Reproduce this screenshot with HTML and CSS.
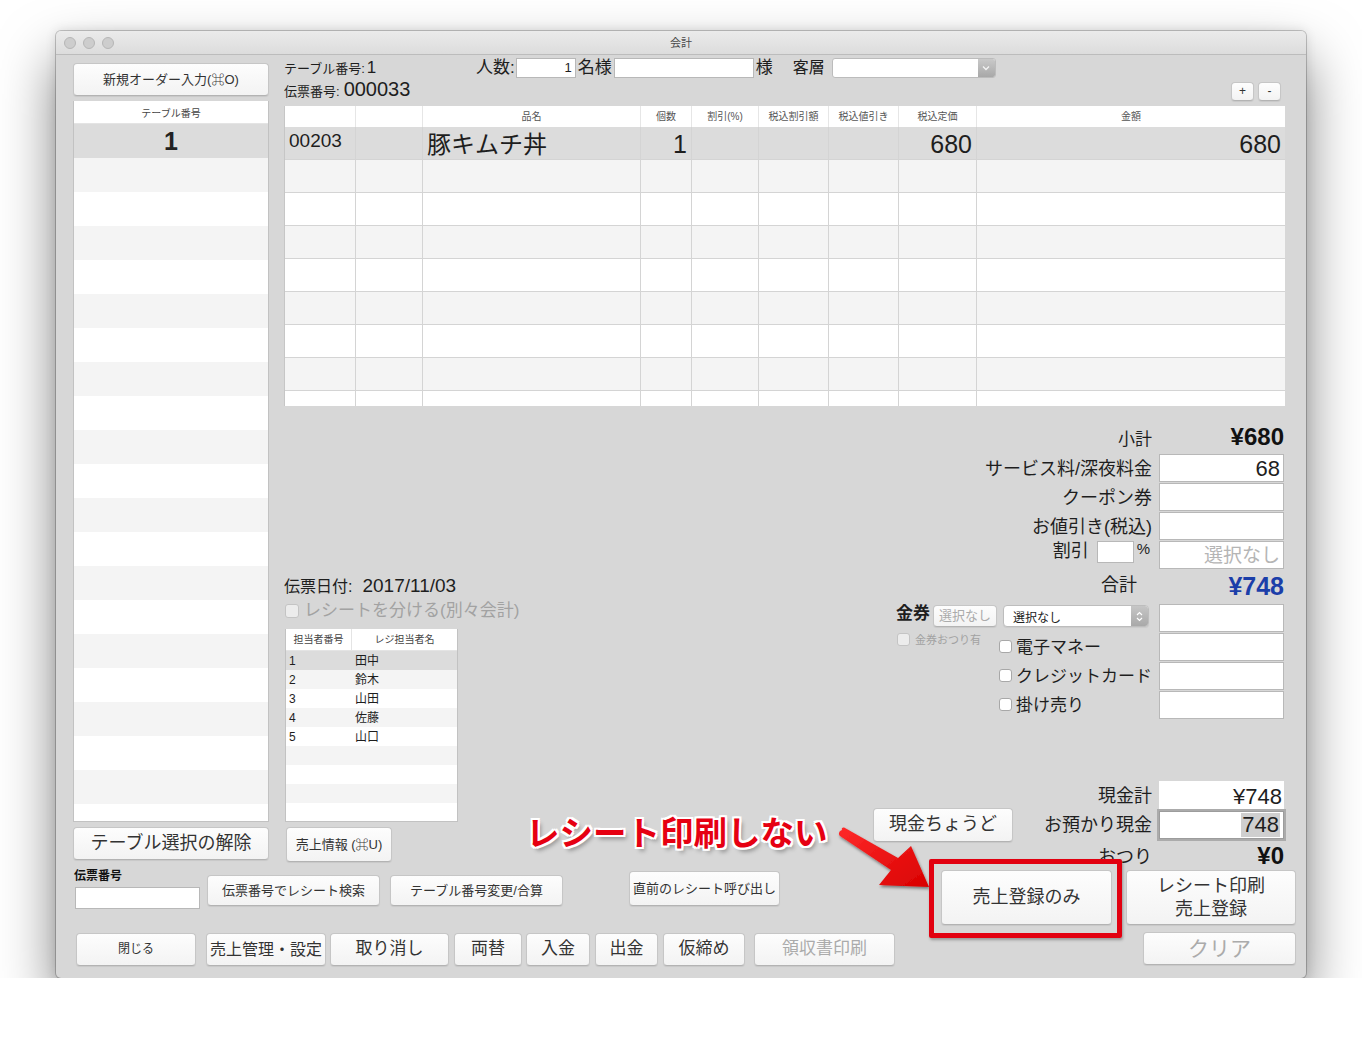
FILE: index.html
```html
<!DOCTYPE html>
<html lang="ja">
<head>
<meta charset="utf-8">
<title>会計</title>
<link rel="stylesheet" href="styles.css">
</head>
<body>
<div class="window">
  <div class="titlebar">
    <div class="lights"><span class="light"></span><span class="light"></span><span class="light"></span></div>
    <div class="title">会計</div>
    <div></div>
  </div>
  <div class="content">
    <div class="upper">
      <div class="leftcol">
        <div class="btn btn-new">新規オーダー入力(⌘O)</div>
        <div class="tlist">
          <div class="tlist-head">テーブル番号</div>
          <div class="tlist-row sel">1</div>
          <div class="tlist-row odd"></div><div class="tlist-row"></div>
          <div class="tlist-row odd"></div><div class="tlist-row"></div>
          <div class="tlist-row odd"></div><div class="tlist-row"></div>
          <div class="tlist-row odd"></div><div class="tlist-row"></div>
          <div class="tlist-row odd"></div><div class="tlist-row"></div>
          <div class="tlist-row odd"></div><div class="tlist-row"></div>
          <div class="tlist-row odd"></div><div class="tlist-row"></div>
          <div class="tlist-row odd"></div><div class="tlist-row"></div>
          <div class="tlist-row odd"></div><div class="tlist-row"></div>
          <div class="tlist-row odd"></div><div class="tlist-row"></div>
        </div>
        <div class="btn btn-clearsel">テーブル選択の解除</div>
      </div>

      <div class="main">
        <div class="header">
          <div class="info">
            <div class="info-line1"><span class="lbl">テーブル番号:</span><span class="v1">1</span></div>
            <div class="info-line2"><span class="lbl">伝票番号:</span><span class="v2">000033</span></div>
          </div>
          <div class="guest">
            <span class="gl">人数:</span>
            <span class="field f-num">1</span>
            <span class="gl gl-mei">名様</span>
            <span class="field f-name"></span>
            <span class="gl gl-sama">様</span>
            <span class="gl gl-seg">客層</span>
            <span class="combo"><span class="combo-btn"><svg width="8" height="6" viewBox="0 0 8 6"><path d="M1 1.5 L4 4.5 L7 1.5" fill="none" stroke="#f4f4f4" stroke-width="1.3"/></svg></span></span>
          </div>
          <div class="pm"><span class="btn btn-sm">+</span><span class="btn btn-sm">-</span></div>
        </div>

        <div class="items">
          <div class="irow ihead"><div></div><div></div><div>品名</div><div>個数</div><div>割引(%)</div><div>税込割引額</div><div>税込値引き</div><div>税込定価</div><div>金額</div></div>
          <div class="irow sel"><div class="code">00203</div><div></div><div class="name">豚キムチ丼</div><div class="num">1</div><div></div><div></div><div></div><div class="num">680</div><div class="num">680</div></div>
          <div class="irow odd"><div></div><div></div><div></div><div></div><div></div><div></div><div></div><div></div><div></div></div>
          <div class="irow"><div></div><div></div><div></div><div></div><div></div><div></div><div></div><div></div><div></div></div>
          <div class="irow odd"><div></div><div></div><div></div><div></div><div></div><div></div><div></div><div></div><div></div></div>
          <div class="irow"><div></div><div></div><div></div><div></div><div></div><div></div><div></div><div></div><div></div></div>
          <div class="irow odd"><div></div><div></div><div></div><div></div><div></div><div></div><div></div><div></div><div></div></div>
          <div class="irow"><div></div><div></div><div></div><div></div><div></div><div></div><div></div><div></div><div></div></div>
          <div class="irow odd"><div></div><div></div><div></div><div></div><div></div><div></div><div></div><div></div><div></div></div>
          <div class="irow"><div></div><div></div><div></div><div></div><div></div><div></div><div></div><div></div><div></div></div>
        </div>

        <div class="middle">
          <div class="midleft">
            <div class="dateline"><span class="dlbl">伝票日付:</span><span class="dval">2017/11/03</span></div>
            <label class="chk chk-split dis"><span class="box"></span>レシートを分ける(別々会計)</label>
            <div class="staff">
              <div class="srow shead"><div>担当者番号</div><div>レジ担当者名</div></div>
              <div class="srow sel"><div>1</div><div>田中</div></div>
              <div class="srow odd"><div>2</div><div>鈴木</div></div>
              <div class="srow"><div>3</div><div>山田</div></div>
              <div class="srow odd"><div>4</div><div>佐藤</div></div>
              <div class="srow"><div>5</div><div>山口</div></div>
              <div class="srow odd"><div></div><div></div></div>
              <div class="srow"><div></div><div></div></div>
              <div class="srow odd"><div></div><div></div></div>
              <div class="srow"><div></div><div></div></div>
            </div>
            <div class="btn btn-salesinfo">売上情報 (⌘U)</div>
          </div>

          <div class="totals">
            <div class="trow r-sub"><div class="tl tl-sub">小計</div><div class="tv bold">¥680</div></div>
            <div class="trow"><div class="tl">サービス料/深夜料金</div><div class="field fv">68</div></div>
            <div class="trow"><div class="tl">クーポン券</div><div class="field fv"></div></div>
            <div class="trow"><div class="tl">お値引き(税込)</div><div class="field fv"></div></div>
            <div class="trow"><div class="tl tl-disc"><span class="disc-l">割引</span><span class="field f-pct"></span><span class="pct">%</span></div><div class="field fv ph">選択なし</div></div>
            <div class="trow r-total"><div class="tl tl-total">合計</div><div class="tv total">¥748</div></div>
            <div class="trow r-kin"><div class="tl tl-kin"><span class="kin">金券</span><span class="btn btn-tiny dis">選択なし</span><span class="popup">選択なし<span class="stepper"><svg width="7" height="11" viewBox="0 0 7 11"><path d="M1 4 L3.5 1.5 L6 4 M1 7 L3.5 9.5 L6 7" fill="none" stroke="#fff" stroke-width="1.2"/></svg></span></span></div><div class="field fv"></div></div>
            <div class="trow"><div class="tl tl-chk"><label class="chk chk-small dis"><span class="box"></span>金券おつり有</label><label class="chk pay"><span class="box"></span>電子マネー</label></div><div class="field fv"></div></div>
            <div class="trow"><div class="tl tl-chk"><label class="chk pay"><span class="box"></span>クレジットカード</label></div><div class="field fv"></div></div>
            <div class="trow"><div class="tl tl-chk"><label class="chk pay"><span class="box"></span>掛け売り</label></div><div class="field fv"></div></div>
            <div class="trow r-cash"><div class="tl">現金計</div><div class="tv cashbox">¥748</div></div>
            <div class="trow r-recv"><div class="tl tl-recv"><span class="btn btn-exact">現金ちょうど</span><span class="recv-l">お預かり現金</span></div><div class="field fv focus"><span class="selx">748</span></div></div>
            <div class="trow r-change"><div class="tl">おつり</div><div class="tv bold">¥0</div></div>
          </div>
        </div>
      </div>
    </div>

    <div class="lower">
      <div class="lower-left">
        <div class="lrow1">
          <div class="slipgrp"><span class="sliplbl">伝票番号</span><span class="field f-slip"></span></div>
          <div class="btn b-search">伝票番号でレシート検索</div>
          <div class="btn b-tblchg">テーブル番号変更/合算</div>
          <div class="btn b-prev">直前のレシート呼び出し</div>
        </div>
        <div class="lrow2">
          <div class="btn b-close">閉じる</div>
          <div class="btn b-mgmt">売上管理・設定</div>
          <div class="btn b-cancel">取り消し</div>
          <div class="btn b-exch">両替</div>
          <div class="btn b-in">入金</div>
          <div class="btn b-out">出金</div>
          <div class="btn b-temp">仮締め</div>
          <div class="btn b-receipt dis">領収書印刷</div>
        </div>
      </div>
      <div class="lower-right">
        <div class="rrow1">
          <div class="btn b-big">売上登録のみ</div>
          <div class="btn b-big b-print">レシート印刷<br>売上登録</div>
        </div>
        <div class="btn b-clear dis">クリア</div>
      </div>
    </div>
  </div>

  <div class="note">レシート印刷しない</div>
  <svg class="arrow" width="110" height="80" viewBox="0 0 110 80">
    <defs>
      <linearGradient id="ag" x1="0" y1="0" x2="1" y2="1">
        <stop offset="0" stop-color="#ff2a2a"/>
        <stop offset="1" stop-color="#d80000"/>
      </linearGradient>
      <filter id="ash" x="-20%" y="-20%" width="150%" height="150%">
        <feDropShadow dx="1" dy="2" stdDeviation="1.5" flood-color="#000" flood-opacity="0.45"/>
      </filter>
    </defs>
    <path d="M6 9 C5 7 7 6 9 7 L62 37 L75 25 L93 66 L43 64 L55 49 L4 15 C2 13 3 10 6 9 Z" fill="url(#ag)" filter="url(#ash)"/>
  </svg>
  <div class="redbox"></div>
</div>
</body>
</html>
```
FILE: styles.css
```css
* { box-sizing: border-box; }

body {
  margin: 0;
  background: #ffffff;
  font-family: "Liberation Sans", "Noto Sans CJK JP", sans-serif;
  color: #1e1e1e;
}

.window {
  position: relative;
  margin: 31px 0 0 56px;
  width: 1250px;
  height: 947px;
  background: #d7d7d7;
  border-radius: 5px;
  box-shadow: 0 28px 55px rgba(0, 0, 0, 0.5), 0 0 12px rgba(0, 0, 0, 0.12), 0 0 0 1px rgba(0, 0, 0, 0.2);
}

/* title bar */
.titlebar {
  height: 24px;
  display: grid;
  grid-template-columns: 1fr auto 1fr;
  align-items: center;
  background: linear-gradient(#ebebeb, #dcdcdc);
  border-bottom: 1px solid #bcbcbc;
  border-radius: 5px 5px 0 0;
}
.lights { display: flex; gap: 7px; padding-left: 8px; }
.light {
  width: 12px; height: 12px; border-radius: 50%;
  background: #cdcdcd; border: 1px solid #b6b6b6;
}
.title { font-size: 11px; color: #4a4a4a; line-height: 14px; }

.content { height: 923px; display: flex; flex-direction: column; }
.upper { display: flex; height: 812px; }

/* generic */
.btn {
  display: flex; align-items: center; justify-content: center;
  background: linear-gradient(#fdfdfd, #f3f3f3);
  border: 1px solid #c6c6c6;
  border-bottom-color: #b3b3b3;
  border-radius: 4px;
  box-shadow: 0 1px 1px rgba(0, 0, 0, 0.07);
  color: #333;
  white-space: nowrap;
  line-height: 1.2;
}
.btn.dis { color: #ababab; }
.field { display: block; background: #fff; border: 1px solid #b8b8b8; }
.odd { background: #f4f4f4; }
.sel { background: #dcdcdc; }

/* left column */
.leftcol { width: 196px; margin-left: 17px; padding-top: 8px; display: flex; flex-direction: column; }
.btn-new { height: 33px; font-size: 13px; }
.tlist {
  margin-top: 5px; height: 721px; background: #fff;
  border: 1px solid #c2c2c2; border-top: none; overflow: hidden;
}
.tlist-head {
  height: 23px; font-size: 10px; color: #444;
  display: flex; align-items: center; justify-content: center;
  border-bottom: 1px solid #e4e4e4;
}
.tlist-row { height: 34px; }
.tlist-row.sel {
  display: flex; align-items: center; justify-content: center;
  font-size: 25px; font-weight: bold; color: #222;
}
.btn-clearsel { margin-top: 5px; height: 33px; font-size: 18px; }

/* main */
.main { margin-left: 15px; width: 1001px; }
.header { height: 51px; display: flex; align-items: flex-start; }
.info { width: 192px; padding-top: 3px; }
.info-line1 { height: 20px; line-height: 20px; display: flex; align-items: baseline; }
.info-line2 { height: 22px; line-height: 22px; display: flex; align-items: baseline; }
.lbl { font-size: 13px; margin-right: 2px; }
.v1 { font-size: 17px; }
.v2 { font-size: 20px; margin-left: 2px; }
.guest { display: flex; align-items: center; height: 20px; margin-top: 3px; }
.gl { font-size: 17px; line-height: 20px; }
.f-num { width: 60px; height: 20px; margin-left: 1px; font-size: 13px; text-align: right; padding-right: 3px; line-height: 18px; }
.gl-mei { margin-left: 2px; }
.f-name { width: 140px; height: 20px; margin-left: 2px; }
.gl-sama { margin-left: 2px; }
.gl-seg { margin-left: 20px; font-size: 16px; }
.combo {
  margin-left: 7px; width: 164px; height: 20px; background: #fff;
  border: 1px solid #bcbcbc; border-radius: 3px; display: flex; justify-content: flex-end;
}
.combo-btn {
  width: 17px; height: 100%;
  background: linear-gradient(#c9c9c9, #a8a8a8);
  border-radius: 0 2px 2px 0;
  display: flex; align-items: center; justify-content: center;
}
.pm { margin-left: auto; align-self: flex-end; margin-bottom: 5px; margin-right: 4px; display: flex; gap: 4px; }
.btn-sm { width: 23px; height: 19px; font-size: 12px; }

/* items grid */
.items { height: 300px; overflow: hidden; background: #fff; border-left: 1px solid #c6c6c6; }
.irow {
  display: grid;
  grid-template-columns: 70px 67px 218px 51px 67px 70px 70px 78px 309px;
  height: 33px;
  border-bottom: 1px solid #d4d4d4;
}
.irow > div + div { border-left: 1px solid #d4d4d4; }
.irow.ihead { height: 21px; border-bottom: none; background: #fff; }
.ihead > div {
  font-size: 10px; color: #555; text-align: center; line-height: 21px;
}
.irow.ihead > div + div { border-left-color: #e6e6e6; }
.irow .code { font-size: 19px; padding-left: 4px; line-height: 27px; }
.irow .name { font-size: 24px; padding-left: 4px; line-height: 36px; }
.irow .num { font-size: 25px; text-align: right; padding-right: 4px; line-height: 34px; }

/* middle */
.middle { display: flex; height: 461px; }
.midleft { width: 176px; display: flex; flex-direction: column; padding-top: 169px; }
.dateline { height: 22px; line-height: 22px; display: flex; align-items: baseline; white-space: nowrap; }
.dlbl { font-size: 16px; }
.dval { font-size: 19px; margin-left: 10px; }
.chk { display: flex; align-items: center; white-space: nowrap; }
.box {
  width: 13px; height: 13px; border: 1px solid #a8a8a8; border-radius: 3px;
  background: #fff; flex: none;
}
.chk.dis { color: #a2a2a2; }
.chk.dis .box { background: #ececec; border-color: #c4c4c4; }
.chk-split { margin-top: 3px; height: 22px; font-size: 17px; line-height: 22px; }
.chk-split .box { width: 14px; height: 14px; margin-left: 1px; margin-right: 5px; }
.staff {
  margin-top: 7px; margin-left: 1px; width: 173px; height: 193px;
  background: #fff; border: 1px solid #c2c2c2; border-top: none; overflow: hidden;
}
.srow { display: grid; grid-template-columns: 65px 1fr; height: 19px; font-size: 12px; line-height: 21px; }
.srow > div:first-child { padding-left: 3px; }
.srow > div + div { padding-left: 4px; }
.srow.shead { height: 22px; line-height: 21px; font-size: 10px; color: #444; border-bottom: 1px solid #e4e4e4; }
.shead > div { text-align: center; padding: 0 !important; }
.shead > div + div { border-left: 1px solid #e4e4e4; }
.btn-salesinfo { margin-top: 5px; margin-left: 2px; width: 106px; height: 35px; font-size: 13px; }

/* totals */
.totals { margin-left: auto; width: 415px; padding-top: 17px; display: flex; flex-direction: column; }
.trow {
  display: grid; grid-template-columns: 284px 126px; column-gap: 5px;
  height: 28px; margin-top: 1px; flex: none;
}
.tl {
  display: flex; align-items: center; justify-content: flex-end;
  padding-right: 2px; padding-bottom: 6px; font-size: 18px; white-space: nowrap;
}
.tv { display: flex; align-items: center; justify-content: flex-end; padding-right: 1px; }
.tv.bold { font-weight: bold; font-size: 24px; color: #111; padding-bottom: 4px; }
.tv.total { font-weight: bold; font-size: 25px; color: #1b3ea9; padding-bottom: 0; }
.fv { width: 125px; height: 28px; font-size: 22px; text-align: right; padding-right: 3px; line-height: 27px; }
.fv.ph { color: #b5b5b5; font-size: 19px; }
.r-sub { margin-top: 0; height: 30px; }
.tl-sub { font-size: 17px; padding-bottom: 4px; }
.r-total { height: 30px; }
.tl-total { padding-right: 17px; }
.r-kin { margin-top: 4px; }
.r-cash { margin-top: 62px; height: 25px; }
.r-recv { margin-top: 2px; height: 34px; align-items: center; }
.r-change { margin-top: 0; height: 25px; }

.tl-disc { align-items: flex-start; padding-right: 4px; padding-bottom: 0; }
.disc-l { line-height: 20px; }
.f-pct { width: 37px; height: 22px; margin-left: 8px; }
.pct { margin-left: 3px; font-size: 15px; line-height: 16px; }

.tl-kin { padding-right: 5px; padding-bottom: 0; align-items: flex-start; }
.kin { font-size: 17px; font-weight: bold; margin-right: 3px; line-height: 20px; }
.btn-tiny { width: 64px; height: 22px; font-size: 13px; margin-right: 6px; margin-top: 1px; }
.popup {
  width: 146px; height: 22px; background: #fff; border: 1px solid #bdbdbd; border-radius: 4px;
  font-size: 12px; padding-left: 9px; display: flex; align-items: center; justify-content: space-between;
  box-shadow: 0 1px 1px rgba(0, 0, 0, 0.06); color: #222; margin-top: 1px;
}
.stepper {
  width: 17px; height: 100%; background: linear-gradient(#c6c6c6, #a9a9a9);
  border-radius: 0 3px 3px 0; display: flex; align-items: center; justify-content: center;
}

.tl-chk { justify-content: flex-start; padding-right: 0; }
.chk-small { align-self: flex-start; margin-left: 27px; font-size: 11px; line-height: 12px; }
.chk-small .box { margin-right: 5px; }
.chk.pay { margin-left: auto; width: 155px; font-size: 17px; }
.chk.pay .box { margin-right: 4px; margin-top: 2px; }

.cashbox { background: #fff; width: 125px; font-size: 22px; padding-right: 2px; padding-bottom: 1px; }
.fv.focus {
  height: 28px; display: flex; align-items: center; justify-content: flex-end;
  box-shadow: 0 0 0 2px #ababab; border-color: #9c9c9c;
}
.selx { background: #cfcfcf; padding: 0 1px; line-height: 24px; }
.tl-recv { justify-content: space-between; padding-left: 3px; padding-bottom: 0; }
.recv-l { padding-bottom: 4px; }
.btn-exact { width: 140px; height: 34px; font-size: 18px; }

/* lower */
.lower { display: flex; height: 111px; }
.lower-left { display: flex; flex-direction: column; }
.lrow1 { display: flex; align-items: flex-start; height: 66px; }
.slipgrp { margin-left: 18px; margin-top: 1px; display: flex; flex-direction: column; }
.sliplbl { font-size: 12px; line-height: 17px; font-weight: bold; color: #111; }
.f-slip { width: 125px; height: 22px; margin-top: 2px; margin-left: 1px; }
.b-search { margin-left: 7px; margin-top: 8px; width: 173px; height: 31px; font-size: 13px; }
.b-tblchg { margin-left: 10px; margin-top: 8px; width: 173px; height: 31px; font-size: 13px; }
.b-prev { margin-left: 66px; margin-top: 4px; width: 151px; height: 35px; font-size: 13px; }
.lrow2 { display: flex; height: 33px; }
.lrow2 .btn { height: 33px; font-size: 17px; }
.b-close { margin-left: 20px; width: 120px; font-size: 12px !important; }
.b-mgmt { margin-left: 10px; width: 120px; font-size: 16px !important; }
.b-cancel { margin-left: 4px; width: 119px; }
.b-exch { margin-left: 5px; width: 68px; }
.b-in { margin-left: 4px; width: 64px; }
.b-out { margin-left: 5px; width: 63px; }
.b-temp { margin-left: 5px; width: 82px; }
.b-receipt { margin-left: 9px; width: 141px; }

.lower-right { margin-left: auto; margin-right: 10px; display: flex; flex-direction: column; align-items: flex-end; }
.rrow1 { display: flex; gap: 14px; margin-top: 3px; }
.b-big { width: 171px; height: 55px; font-size: 18px; text-align: center; }
.b-print { width: 170px; line-height: 23px; }
.b-clear { margin-top: 7px; width: 153px; height: 33px; font-size: 21px; }

/* annotation overlay */
.note {
  position: absolute; left: 470px; top: 779px;
  font-size: 33.5px; font-weight: 700; line-height: 42px; color: #e60012;
  font-family: "Noto Sans CJK JP", sans-serif;
  white-space: nowrap;
  text-shadow:
    2px 0 0 #fff, -2px 0 0 #fff, 0 2px 0 #fff, 0 -2px 0 #fff,
    2px 2px 0 #fff, -2px -2px 0 #fff, 2px -2px 0 #fff, -2px 2px 0 #fff,
    3px 4px 4px rgba(0, 0, 0, 0.35);
}
.arrow { position: absolute; left: 780px; top: 790px; }
.redbox {
  position: absolute; left: 873px; top: 828px; width: 193px; height: 79px;
  border: 5px solid #e20010; border-radius: 2px;
  box-shadow: 1px 2px 3px rgba(0, 0, 0, 0.3);
}
```
